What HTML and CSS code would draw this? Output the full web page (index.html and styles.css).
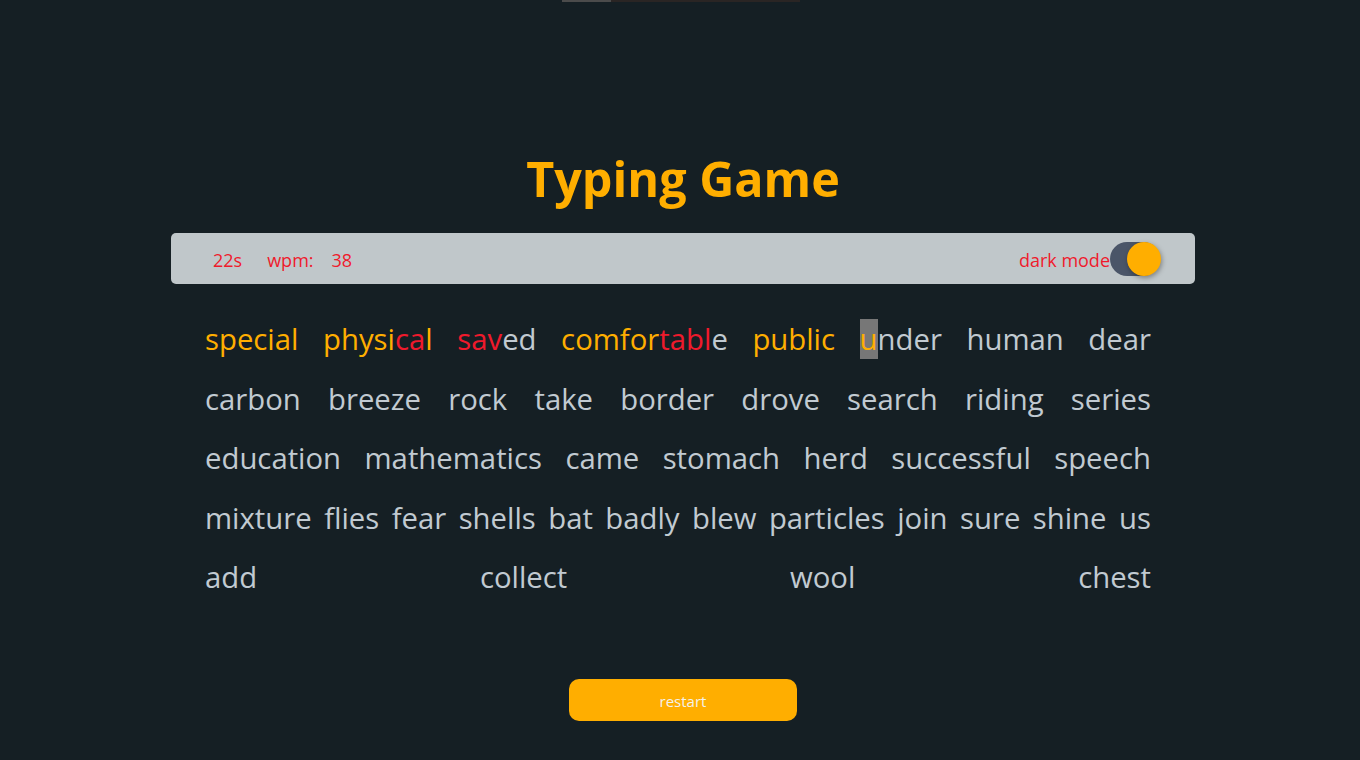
FILE: index.html
```html
<!DOCTYPE html>
<html lang="en">
<head>
<meta charset="utf-8">
<title>Typing Game</title>
<link rel="stylesheet" href="styles.css">
</head>
<body>
<div class="page">
  <div class="progress"><div class="progress-fill"></div></div>
  <h1 class="title">Typing Game</h1>
  <div class="status">
    <div class="stats">
      <span class="time">22s</span>
      <span class="wpm-label">wpm:</span>
      <span class="wpm">38</span>
    </div>
    <div class="mode">
      <span class="mode-label">dark mode</span>
      <span class="toggle"><span class="knob"></span></span>
    </div>
  </div>
  <div class="words">
    <div class="line">
      <span class="w"><span class="ok">special</span></span>
      <span class="w"><span class="ok">physi</span><span class="bad">ca</span><span class="ok">l</span></span>
      <span class="w"><span class="bad">sav</span>ed</span>
      <span class="w"><span class="ok">comfor</span><span class="bad">tabl</span>e</span>
      <span class="w"><span class="ok">public</span></span>
      <span class="w"><span class="ok cursor">u</span>nder</span>
      <span class="w">human</span>
      <span class="w">dear</span>
    </div>
    <div class="line">
      <span class="w">carbon</span>
      <span class="w">breeze</span>
      <span class="w">rock</span>
      <span class="w">take</span>
      <span class="w">border</span>
      <span class="w">drove</span>
      <span class="w">search</span>
      <span class="w">riding</span>
      <span class="w">series</span>
    </div>
    <div class="line">
      <span class="w">education</span>
      <span class="w">mathematics</span>
      <span class="w">came</span>
      <span class="w">stomach</span>
      <span class="w">herd</span>
      <span class="w">successful</span>
      <span class="w">speech</span>
    </div>
    <div class="line">
      <span class="w">mixture</span>
      <span class="w">flies</span>
      <span class="w">fear</span>
      <span class="w">shells</span>
      <span class="w">bat</span>
      <span class="w">badly</span>
      <span class="w">blew</span>
      <span class="w">particles</span>
      <span class="w">join</span>
      <span class="w">sure</span>
      <span class="w">shine</span>
      <span class="w">us</span>
    </div>
    <div class="line">
      <span class="w">add</span>
      <span class="w">collect</span>
      <span class="w">wool</span>
      <span class="w">chest</span>
    </div>
  </div>
  <button class="restart">restart</button>
</div>
</body>
</html>
```

FILE: styles.css
```css
html, body {
  margin: 0;
  padding: 0;
  background: #151f24;
}

body {
  font-family: "Open Sans", "Noto Sans", sans-serif;
  height: 760px;
  overflow: hidden;
}

.page {
  width: 1024px;
  margin: 0 auto;
  padding-left: 6px;
  display: flex;
  flex-direction: column;
  align-items: stretch;
}

.progress {
  align-self: center;
  width: 238px;
  height: 2px;
  margin-right: 4px;
  background: #2a2524;
}

.progress-fill {
  width: 49px;
  height: 100%;
  background: #4b4b4b;
}

.title {
  margin: 151px 0 0;
  font-size: 48.5px;
  line-height: 50px;
  font-weight: 700;
  color: #ffae00;
  text-align: center;
}

.status {
  margin-top: 30px;
  height: 51px;
  box-sizing: border-box;
  background: #c0c7ca;
  border-radius: 5px;
  display: flex;
  align-items: center;
  justify-content: space-between;
  padding: 0 35px 0 42px;
  color: #ef1a2c;
  font-size: 18px;
}

.stats {
  display: flex;
  align-items: center;
  padding-top: 2px;
}

.wpm-label {
  margin-left: 25px;
}

.wpm {
  margin-left: 18px;
}

.mode {
  display: flex;
  align-items: center;
}

.mode-label {
  padding-top: 2px;
}

.toggle {
  position: relative;
  width: 50px;
  height: 34px;
  border-radius: 17px;
  background: #4a5568;
}

.knob {
  position: absolute;
  top: 0;
  right: -1px;
  width: 34px;
  height: 34px;
  border-radius: 50%;
  background: #ffae00;
  box-shadow: 1px 2px 5px rgba(0, 0, 0, 0.35);
}

.words {
  margin-top: 26px;
  padding: 0 44px 0 34px;
  font-size: 29.3px;
  color: #c1cad1;
}

.line {
  display: flex;
  justify-content: space-between;
  align-items: center;
  height: 59.5px;
  line-height: 59.5px;
}

.w {
  white-space: nowrap;
}

.ok {
  color: #ffae00;
}

.bad {
  color: #ef1a2c;
}

.cursor {
  background: #777777;
}

.restart {
  align-self: center;
  margin-top: 71px;
  width: 228px;
  height: 42px;
  padding: 3px 0 0;
  border: none;
  border-radius: 10px;
  background: #ffae00;
  color: #f4f1ea;
  font-family: "Open Sans", "Noto Sans", sans-serif;
  font-size: 15px;
  cursor: pointer;
}
```
